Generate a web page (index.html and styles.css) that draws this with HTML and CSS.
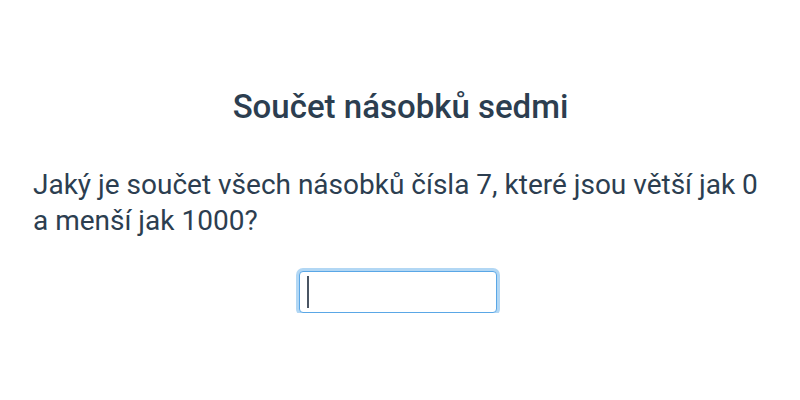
FILE: index.html
```html
<!DOCTYPE html>
<html lang="cs">
<head>
    <meta charset="UTF-8">
    <meta name="viewport" content="width=device-width, initial-scale=1.0">
    <title>Součet násobků sedmi</title>
    <link rel="stylesheet" href="styles.css">
</head>
<body>
    <div class="task">
        <h1 class="task-title">Součet násobků sedmi</h1>
        <p class="task-text">Jaký je součet všech násobků čísla 7, které jsou větší jak 0 a menší jak 1000?</p>
        <div class="answer">
            <span class="answer-field">
                <input type="text" class="answer-input" autofocus>
            </span>
        </div>
    </div>
</body>
</html>
```

FILE: styles.css
```css
body {
    font-family: Roboto, "Noto Sans", sans-serif;
    color: #2c3e50;
    background-color: #fff;
    margin: 0;
    padding: 0;
}

.task {
    padding: 87px 32px 0 33px;
}

.task-title {
    margin: 0 0 40px;
    font-size: 33px;
    font-weight: 500;
    line-height: 40px;
    text-align: center;
}

.task-text {
    margin: 0 0 32px;
    font-size: 28px;
    line-height: 36px;
}

.answer {
    display: flex;
    justify-content: center;
    padding-right: 6px;
}

.answer-field {
    position: relative;
    display: block;
}

/* static caret, the focused field in the shot shows one */
.answer-field::after {
    content: "";
    position: absolute;
    left: 8px;
    top: 5px;
    width: 2px;
    height: 32px;
    background: #4a5563;
}

.answer-input {
    display: block;
    width: 198px;
    height: 42px;
    box-sizing: border-box;
    padding: 4px 8px;
    font-family: inherit;
    font-size: 28px;
    color: #2c3e50;
    border: 1px solid #5aa7e6;
    border-radius: 4px;
    box-shadow: 0 0 0 3px rgba(102, 175, 233, 0.5);
    outline: none;
    caret-color: transparent;
}
```
